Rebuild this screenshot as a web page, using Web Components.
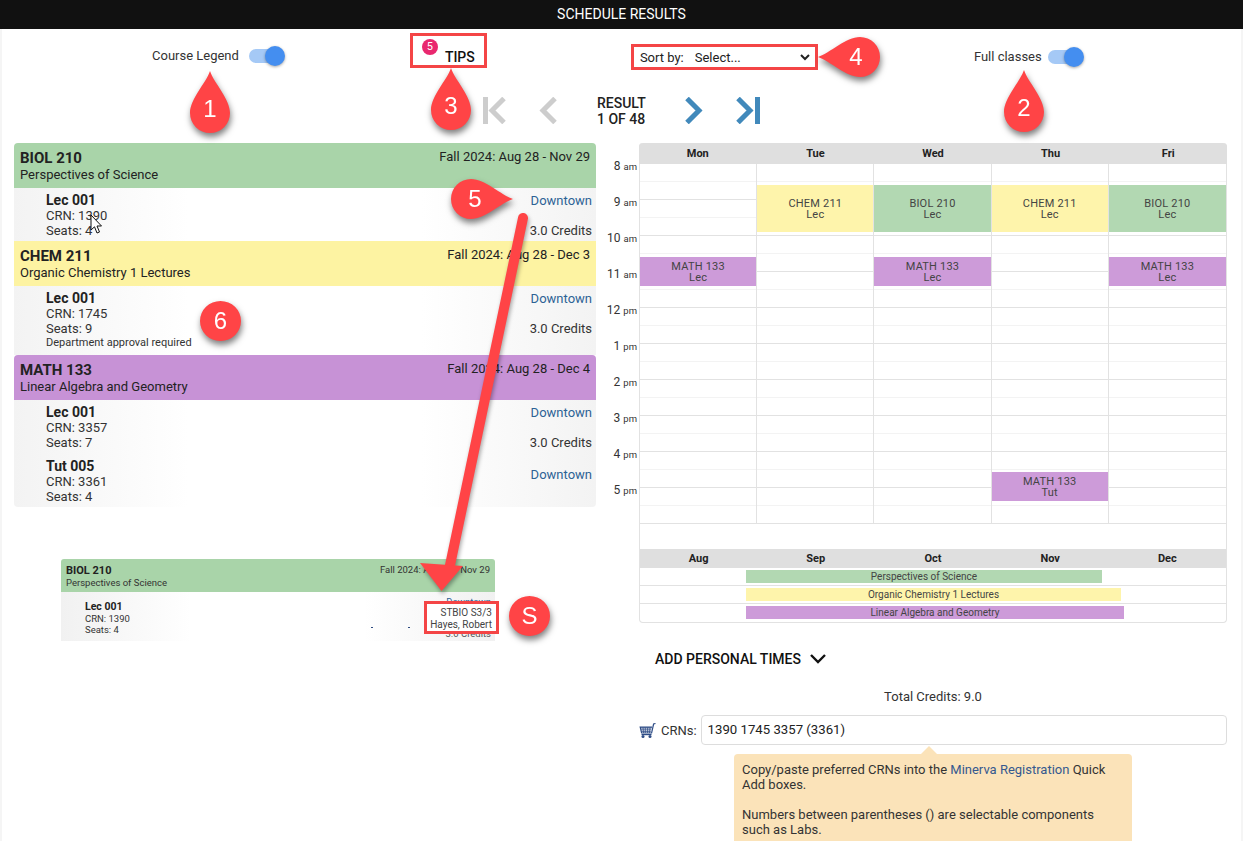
<!DOCTYPE html>
<html lang="en">
<head>
<meta charset="utf-8">
<title>Schedule Results</title>
<style>
   html, body { margin: 0; height: 841px; overflow: hidden; background: #fff; }
   body { font: 14px/15px Roboto, "Liberation Sans", sans-serif; color: #222; }
</style>
</head>
<body>
<schedule-page>
   <page-toolbar slot="toolbar"></page-toolbar>
   <result-nav slot="toolbar"></result-nav>

   <div slot="left">
      <course-card code="BIOL 210" name="Perspectives of Science" dates="Fall 2024: Aug 28 - Nov 29" color="#a9d4a9">
         <course-section label="Lec 001" crn="1390" seats="4" credits="3.0 Credits"></course-section>
      </course-card>
      <course-card code="CHEM 211" name="Organic Chemistry 1 Lectures" dates="Fall 2024: Aug 28 - Dec 3" color="#fdf3a2">
         <course-section label="Lec 001" crn="1745" seats="9" credits="3.0 Credits" note="Department approval required"></course-section>
      </course-card>
      <course-card code="MATH 133" name="Linear Algebra and Geometry" dates="Fall 2024: Aug 28 - Dec 4" color="#c792d6">
         <course-section label="Lec 001" crn="3357" seats="7" credits="3.0 Credits"></course-section>
         <course-section label="Tut 005" crn="3361" seats="4"></course-section>
      </course-card>
      <mini-card></mini-card>
   </div>

   <div slot="right">
      <week-calendar></week-calendar>
      <crn-panel></crn-panel>
   </div>

   <!-- annotations drawn over the screenshot -->
   <callout-arrow slot="overlay"></callout-arrow>
   <callout-pin slot="overlay" dir="up" x="190" y="71" text="1"></callout-pin>
   <callout-pin slot="overlay" dir="up" x="1004" y="70" text="2"></callout-pin>
   <callout-pin slot="overlay" dir="up" x="431" y="68" text="3"></callout-pin>
   <callout-pin slot="overlay" dir="left" x="818" y="37" text="4"></callout-pin>
   <callout-pin slot="overlay" dir="right" x="451" y="179" text="5"></callout-pin>
   <callout-pin slot="overlay" dir="round" x="200" y="301" text="6"></callout-pin>
   <callout-pin slot="overlay" dir="round" x="509" y="596" text="S"></callout-pin>
   <mouse-cursor slot="overlay"></mouse-cursor>
</schedule-page>

<script>
// small helper, every element below has the same shadow setup
function shadow(el, html) {
   el.attachShadow({ mode: "open" });
   el.shadowRoot.innerHTML = html;
}

class SchedulePage extends HTMLElement {
   constructor() {
      super();
      shadow(this, `
         <style>
            :host { display: block; position: relative; height: 841px; overflow: hidden; box-shadow: inset 2px 0 #f5f5f5, inset -2px 0 #f5f5f5; }
            header { height: 29px; background: #111; color: #fff; text-align: center; font-size: 14px; font-weight: 400; line-height: 29px; }
            .top { height: 114px; }
            main { display: grid; grid-template-columns: 582px 588px; column-gap: 43px; padding-left: 14px; }
            .overlay { position: absolute; inset: 0; pointer-events: none; }
         </style>
         <header>SCHEDULE RESULTS</header>
         <div class="top"><slot name="toolbar"></slot></div>
         <main>
            <div><slot name="left"></slot></div>
            <div><slot name="right"></slot></div>
         </main>
         <div class="overlay"><slot name="overlay"></slot></div>
      `);
   }
}

class ToggleSwitch extends HTMLElement {
   constructor() {
      super();
      shadow(this, `
         <style>
            :host { display: inline-flex; align-items: center; gap: var(--gap, 10px); font-size: 13px; color: #333; height: 20px; }
            .label { margin-top: -2px; }
            .sw { position: relative; width: 36px; height: 20px; display: block; }
            .track { position: absolute; left: 0; top: 3px; width: 28px; height: 14px; border-radius: 7px; background: #a5c9f6; }
            .thumb { position: absolute; right: 0; top: 0; width: 20px; height: 20px; border-radius: 50%; background: #448ef0; box-shadow: 0 1px 3px rgba(0,0,0,.35); }
         </style>
         <span class="label"><slot></slot></span>
         <span class="sw"><span class="track"></span><span class="thumb"></span></span>
      `);
   }
}

class PageToolbar extends HTMLElement {
   constructor() {
      super();
      shadow(this, `
         <style>
            :host { display: flex; align-items: flex-start; padding: 4px 0 0 152px; height: 35px; }
            .legend { margin-top: 13px; }
            .tips { box-sizing: border-box; position: relative; width: 77px; height: 35px; margin-left: 125px; border: 3px solid #f44546; }
            .tips b { position: absolute; left: 32px; top: 14px; font-size: 14px; font-weight: 500; color: #111; }
            .badge { position: absolute; left: 9px; top: 3px; width: 16px; height: 16px; border-radius: 50%; background: #e9286f; color: #fff; font-size: 11px; line-height: 16px; text-align: center; }
            .sort { box-sizing: border-box; display: flex; align-items: center; width: 187px; height: 26px; margin: 11px 0 0 144px; padding-left: 6px; border: 3px solid #f44546; font-size: 13px; font-weight: 400; color: #222; }
            select { flex: 1; min-width: 0; height: 20px; margin: 0 2px 0 7px; border: 0; background: #fff; font: inherit; color: inherit; padding: 0; }
            .full { margin: 14px 0 0 156px; --gap: 6px; }
         </style>
         <toggle-switch class="legend">Course Legend</toggle-switch>
         <div class="tips"><span class="badge">5</span><b>TIPS</b></div>
         <label class="sort">Sort by:
            <select><option>Select...</option></select>
         </label>
         <toggle-switch class="full">Full classes</toggle-switch>
      `);
   }
}

class ResultNav extends HTMLElement {
   constructor() {
      super();
      shadow(this, `
         <style>
            :host { display: flex; align-items: center; height: 27px; margin-top: 29px; padding-left: 483px; }
            svg { display: block; height: 27px; fill: none; stroke-width: 5; flex: none; }
            .off { stroke: #cdcdcd; }
            .on { stroke: #4189bb; }
            .result { flex: none; width: 48px; margin: 0 40px; text-align: center; white-space: nowrap; font-weight: 500; font-size: 14px; line-height: 16px; color: #222; }
         </style>
         <svg class="off" width="23" viewBox="0 0 23 27" style="margin-right:33px"><path d="M2.5 0v27M21 1.5 9 13.5l12 12"/></svg>
         <svg class="off" width="18" viewBox="0 0 18 27"><path d="M16 1.5 4 13.5l12 12"/></svg>
         <div class="result">RESULT<br>1 OF 48</div>
         <svg class="on" width="18" viewBox="0 0 18 27" style="margin-right:33px"><path d="M2 1.5l12 12-12 12"/></svg>
         <svg class="on" width="24" viewBox="0 0 24 27"><path d="M2 1.5l12 12-12 12M21.5 0v27"/></svg>
      `);
   }
}

class CourseCard extends HTMLElement {
   constructor() {
      super();
      const a = n => this.getAttribute(n);
      shadow(this, `
         <style>
            :host { display: block; }
            :host(:first-child) .head { border-radius: 4px 4px 0 0; }
            .head { display: flex; justify-content: space-between; height: 45px; box-sizing: border-box; padding: 6px 6px 0; color: #222; }
            .code { font-size: 15px; font-weight: 700; line-height: 18px; }
            .name { font-size: 13px; line-height: 16px; }
            .dates { font-size: 13px; line-height: 16px; padding-top: 0; }
            .body { background: linear-gradient(to right, #f3f3f3, #fff 30%, #fff 70%, #f3f3f3); }
            :host(:nth-of-type(3)) .head { border-radius: 4px 4px 0 0; }
            :host(:nth-of-type(3)) .body { border-radius: 0 0 4px 4px; }
         </style>
         <div class="head" style="background:${a("color")}">
            <div><div class="code">${a("code")}</div><div class="name">${a("name")}</div></div>
            <div class="dates">${a("dates")}</div>
         </div>
         <div class="body"><slot></slot></div>
      `);
   }
}

class CourseSection extends HTMLElement {
   constructor() {
      super();
      const a = n => this.getAttribute(n);
      const note = a("note") ? `<div class="note">${a("note")}</div>` : "";
      const credits = a("credits") ? `<div class="credits">${a("credits")}</div>` : "";
      shadow(this, `
         <style>
            :host { display: flex; justify-content: space-between; box-sizing: border-box; padding: 5px 4px 3px 32px; font-size: 13px; line-height: 15px; color: #333; }
            :host(:not(:first-child)) { padding-top: 6px; }
            :host(:not(:first-child)) a { margin-top: 8px; }
            b { font-size: 14px; font-weight: 700; color: #222; display: block; }
            .note { font-size: 11px; line-height: 14px; padding-bottom: 2px; }
            .right { display: flex; flex-direction: column; align-items: flex-end; }
            a { color: #2d6295; text-decoration: none; }
            .credits { margin-top: 15px; }
         </style>
         <div><b>${a("label")}</b>CRN: ${a("crn")}<br>Seats: ${a("seats")}${note}</div>
         <div class="right"><a>Downtown</a>${credits}</div>
      `);
   }
}

// pasted screenshot of the section hover under the list
class MiniCard extends HTMLElement {
   constructor() {
      super();
      shadow(this, `
         <style>
            :host { display: block; position: relative; width: 434px; height: 82px; margin: 52px 0 0 47px; color: #333; }
            .head { display: flex; justify-content: space-between; box-sizing: border-box; height: 33px; padding: 5px 5px 0; background: #a9d4a9; border-radius: 3px 3px 0 0; font-size: 9.5px; line-height: 12px; }
            .head b { display: block; font-size: 11px; font-weight: 700; line-height: 13px; color: #222; }
            .body { display: flex; height: 49px; box-sizing: border-box; padding: 9px 4px 0 24px; font-size: 9.5px; line-height: 11.5px; justify-content: space-between; background: linear-gradient(to right, #f1f1f1, #fff 30%, #fff 70%, #f1f1f1); }
            .body b { display: block; font-size: 10.5px; font-weight: 700; color: #222; }
            .right { text-align: right; color: #2d6295; margin-top: -5px; }
            .cr { color: #555; margin-top: 20px; }
            .box { position: absolute; left: 363px; top: 42px; box-sizing: border-box; width: 75px; height: 33px; padding: 3px 4px 0 0; border: 3px solid #f44546; background: #fff; text-align: right; font-size: 10px; line-height: 12px; color: #444; }
            i { position: absolute; top: 68px; width: 2px; height: 1px; background: #2d4a80; }
         </style>
         <div class="head"><div><b>BIOL 210</b>Perspectives of Science</div><div>Fall 2024: Aug 28 - Nov 29</div></div>
         <div class="body">
            <div><b>Lec 001</b>CRN: 1390<br>Seats: 4</div>
            <div class="right">Downtown<div class="cr">3.0 Credits</div></div>
         </div>
         <i style="left:310px"></i><i style="left:347px"></i>
         <div class="box">STBIO S3/3<br>Hayes, Robert</div>
      `);
   }
}

const DAYS = ["Mon", "Tue", "Wed", "Thu", "Fri"];
const EVENTS = [
   { day: 1, from: 8 + 35 / 60, to: 9 + 53 / 60, code: "CHEM 211", kind: "Lec", color: "#fef4ab", pad: 13 },
   { day: 2, from: 8 + 35 / 60, to: 9 + 53 / 60, code: "BIOL 210", kind: "Lec", color: "#b2d8b2", pad: 13 },
   { day: 3, from: 8 + 35 / 60, to: 9 + 53 / 60, code: "CHEM 211", kind: "Lec", color: "#fef4ab", pad: 13 },
   { day: 4, from: 8 + 35 / 60, to: 9 + 53 / 60, code: "BIOL 210", kind: "Lec", color: "#b2d8b2", pad: 13 },
   { day: 0, from: 10 + 35 / 60, to: 11 + 23 / 60, code: "MATH 133", kind: "Lec", color: "#cd9bd9", pad: 4 },
   { day: 2, from: 10 + 35 / 60, to: 11 + 23 / 60, code: "MATH 133", kind: "Lec", color: "#cd9bd9", pad: 4 },
   { day: 4, from: 10 + 35 / 60, to: 11 + 23 / 60, code: "MATH 133", kind: "Lec", color: "#cd9bd9", pad: 4 },
   { day: 3, from: 16 + 33 / 60, to: 17 + 21 / 60, code: "MATH 133", kind: "Tut", color: "#cd9bd9", pad: 4 },
];
const HOURS = [[8, "am"], [9, "am"], [10, "am"], [11, "am"], [12, "pm"], [1, "pm"], [2, "pm"], [3, "pm"], [4, "pm"], [5, "pm"]];
const HOUR_PX = 36;

class WeekCalendar extends HTMLElement {
   constructor() {
      super();
      const columns = DAYS.map((d, i) => {
         const evs = EVENTS.filter(e => e.day == i).map(e =>
            `<div class="ev" style="top:${(e.from - 8) * HOUR_PX}px;height:${(e.to - e.from) * HOUR_PX}px;padding-top:${e.pad}px;background:${e.color}">${e.code}<br>${e.kind}</div>`
         ).join("");
         return `<div class="col">${evs}</div>`;
      }).join("");
      shadow(this, `
         <style>
            :host { display: grid; grid-template-columns: 33px 1fr; margin-left: -33px; }
            .times { padding-top: 21px; }
            .times div { height: 36px; box-sizing: border-box; padding: 0 2px 0 0; text-align: right; font-size: 12px; line-height: 5px; color: #333; white-space: nowrap; }
            .times small { font-size: 9.5px; }
            .cal { border: solid #e2e2e2; border-width: 0 1px 1px; border-radius: 4px; }
            .days, .months { display: grid; grid-template-columns: repeat(5, 1fr); background: #dfdfdf; text-align: center; font-size: 11px; font-weight: 700; color: #222; }
            .days { height: 21px; line-height: 21px; border-radius: 4px 4px 0 0; margin: 0 -1px; }
            .months { height: 19px; line-height: 20px; margin-top: 25px; }
            .grid { display: grid; grid-template-columns: repeat(5, 1fr); }
            .col { position: relative; height: 360px; border-right: 1px solid #e2e2e2; background: repeating-linear-gradient(to bottom, transparent 0 17px, #f3f3f3 17px 18px, transparent 18px 35px, #e2e2e2 35px 36px); }
            .col:last-child { border-right: 0; }
            .ev { position: absolute; left: 0; right: 0; box-sizing: border-box; text-align: center; font-size: 11px; line-height: 11px; color: #444; letter-spacing: .2px; }
            .tl { display: flex; box-sizing: border-box; height: 18px; padding-top: 2px; border-bottom: 1px solid #e2e2e2; font-size: 10px; line-height: 14px; color: #444; text-align: center; }
            .tl:last-child { border-bottom: 0; }
            .tl span { display: block; height: 13px; margin-left: 106px; }
         </style>
         <div class="times">${HOURS.map(h => `<div>${h[0]} <small>${h[1]}</small></div>`).join("")}</div>
         <div class="cal">
            <div class="days">${DAYS.map(d => `<div>${d}</div>`).join("")}</div>
            <div class="grid">${columns}</div>
            <div class="months">${["Aug", "Sep", "Oct", "Nov", "Dec"].map(d => `<div>${d}</div>`).join("")}</div>
            <div class="tl"><span style="width:356px;background:#b2d8b2">Perspectives of Science</span></div>
            <div class="tl"><span style="width:375px;background:#fef4ab">Organic Chemistry 1 Lectures</span></div>
            <div class="tl"><span style="width:378px;background:#cd9bd9">Linear Algebra and Geometry</span></div>
         </div>
      `);
   }
}

class CrnPanel extends HTMLElement {
   constructor() {
      super();
      shadow(this, `
         <style>
            :host { display: block; font-size: 14px; line-height: 15px; color: #222; }
            .add { display: flex; align-items: center; gap: 9px; height: 20px; margin: 26px 0 0 16px; font-weight: 500; color: #111; }
            .total { margin-top: 20px; text-align: center; font-size: 13px; color: #333; }
            .row { display: flex; align-items: center; height: 30px; margin-top: 11px; }
            .row svg { margin: 0 5px 0 -1px; }
            .row span { font-size: 13px; color: #333; margin-right: 4px; }
            .input { flex: 1; box-sizing: border-box; height: 30px; border: 1px solid #ddd; border-radius: 4px; padding-left: 6px; line-height: 28px; font-size: 13.2px; }
            .tip { position: relative; box-sizing: border-box; width: 398px; height: 120px; margin: 9px 0 0 95px; padding: 8px; background: #fbe3b9; border-radius: 4px; font-size: 13px; color: #333; }
            .tip::before { content: ""; position: absolute; left: 187px; top: -8px; border: solid transparent; border-width: 0 8.5px 8px; border-bottom-color: #fbe3b9; }
            a { color: #35598f; }
         </style>
         <div class="add">ADD PERSONAL TIMES
            <svg width="16" height="10" viewBox="0 0 16 10" fill="none" stroke="#111" stroke-width="2.4"><path d="M1 1l7 7 7-7"/></svg>
         </div>
         <div class="total">Total Credits: 9.0</div>
         <div class="row">
            <svg width="18" height="15" viewBox="0 0 18 15">
               <path d="M17.5.5 15.6 1 13.6 10H3.6L2.2 4.2H14" fill="none" stroke="#2f4d86" stroke-width="1.2"/>
               <path d="M2.6 5h11M3 6.800h10.200M3.300 8.400h9.500M5 4.500l.5 5.500M7.300 4.500v5.500M9.600 4.500v5.500M12 4.500l-.5 5.500" stroke="#2f4d86" stroke-width=".8"/>
               <rect x="3.500" y="11" width="10" height="1.200" fill="#2f4d86"/>
               <circle cx="5" cy="13.500" r="1.500" fill="#2f4d86"/><circle cx="12" cy="13.500" r="1.500" fill="#2f4d86"/>
            </svg>
            <span>CRNs:</span>
            <div class="input">1390 1745 3357 (3361)</div>
         </div>
         <div class="tip">Copy/paste preferred CRNs into the <a>Minerva Registration</a> Quick Add boxes.<br><br>Numbers between parentheses () are selectable components such as Labs.</div>
      `);
   }
}

// shapes for the annotation pins, tip on the named side
const PIN_SHAPES = {
   up: [40, 62, "M20 0C24 12 40 28 40 42A20 20 0 0 1 0 42C0 28 16 12 20 0Z", "20px", "38px"],
   left: [62, 40, "M0 20C12 16 28 0 42 0A20 20 0 0 1 42 40C28 40 12 24 0 20Z", "38px", "20px"],
   right: [62, 40, "M62 20C50 16 34 0 20 0A20 20 0 0 0 20 40C34 40 50 24 62 20Z", "24px", "20px"],
   round: [41, 40, "M41 20A20.500 20 0 1 1 0 20A20.500 20 0 0 1 41 20Z", "20.500px", "20px"],
};

class CalloutPin extends HTMLElement {
   constructor() {
      super();
      const [w, h, d, cx, cy] = PIN_SHAPES[this.getAttribute("dir")];
      shadow(this, `
         <style>
            :host { position: absolute; display: block; width: ${w}px; height: ${h}px; filter: drop-shadow(1px 4px 3px rgba(0,0,0,.5)); }
            svg { display: block; }
            span { position: absolute; left: ${cx}; top: ${cy}; transform: translate(-50%, -50%); color: #fff; font: 400 24px/1 "Liberation Sans", sans-serif; }
         </style>
         <svg width="${w}" height="${h}"><path d="${d}" fill="#ff4446"/></svg>
         <span>${this.getAttribute("text")}</span>
      `);
      this.style.left = this.getAttribute("x") + "px";
      this.style.top = this.getAttribute("y") + "px";
   }
}

class CalloutArrow extends HTMLElement {
   constructor() {
      super();
      shadow(this, `
         <style>
            :host { position: absolute; left: 0; top: 0; display: block; filter: drop-shadow(1px 3px 2px rgba(0,0,0,.35)); }
            svg { display: block; }
         </style>
         <svg width="600" height="620" fill="#ff4446">
            <path d="M523 218 449 570" stroke="#ff4446" stroke-width="10" stroke-linecap="round"/>
            <path d="M441.500 591 420 563 463 566Z"/>
         </svg>
      `);
   }
}

class MouseCursor extends HTMLElement {
   constructor() {
      super();
      shadow(this, `
         <style>:host { position: absolute; left: 90px; top: 214px; display: block; }</style>
         <svg width="14" height="22" viewBox="0 0 14 22" style="display:block">
            <path d="M1 1v15l3.500-3.200 2.500 6.200 2.500-1-2.500-6h4.500Z" fill="#fff" stroke="#111"/>
         </svg>
      `);
   }
}

customElements.define("schedule-page", SchedulePage);
customElements.define("toggle-switch", ToggleSwitch);
customElements.define("page-toolbar", PageToolbar);
customElements.define("result-nav", ResultNav);
customElements.define("course-card", CourseCard);
customElements.define("course-section", CourseSection);
customElements.define("mini-card", MiniCard);
customElements.define("week-calendar", WeekCalendar);
customElements.define("crn-panel", CrnPanel);
customElements.define("callout-pin", CalloutPin);
customElements.define("callout-arrow", CalloutArrow);
customElements.define("mouse-cursor", MouseCursor);
</script>
</body>
</html>
